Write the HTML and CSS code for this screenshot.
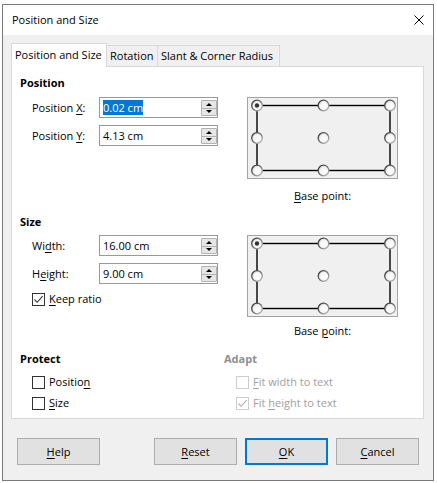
FILE: index.html
```html
<!DOCTYPE html>
<html lang="en">
<head>
<meta charset="utf-8">
<title>Position and Size</title>
<link rel="stylesheet" href="styles.css">
</head>
<body>
<div class="window">
  <div class="titlebar">
    <span class="title">Position and Size</span>
    <svg class="close" width="10" height="10" viewBox="0 0 10 10"><path d="M0.5 0.5 L9.5 9.5 M9.5 0.5 L0.5 9.5" stroke="#000" stroke-width="1" fill="none"/></svg>
  </div>
  <div class="content">
    <div class="tabs">
      <div class="tab active t1">Position and Size</div>
      <div class="tab t2">Rotation</div>
      <div class="tab t3">Slant &amp; Corner Radius</div>
    </div>
    <div class="panel">
      <div class="sec-head">Position</div>
      <div class="row">
        <div class="fields">
          <div class="field"><span class="flabel">Position <u>X</u>:</span>
            <div class="input"><span class="value"><span class="sel">0.02 cm</span></span>
              <div class="spin"><div class="half up"><i class="tri-up"></i></div><div class="half"><i class="tri-down"></i></div></div></div></div>
          <div class="field"><span class="flabel">Position <u>Y</u>:</span>
            <div class="input"><span class="value">4.13 cm</span>
              <div class="spin"><div class="half up"><i class="tri-up"></i></div><div class="half"><i class="tri-down"></i></div></div></div></div>
        </div>
        <div class="grid-col">
          <svg class="grid" width="151" height="82" viewBox="0 0 151 82">
            <defs>
              <radialGradient id="fa" cx="0.6" cy="0.6" r="0.6"><stop offset="0" stop-color="#ffffff"/><stop offset="0.7" stop-color="#f4f4f4"/><stop offset="1" stop-color="#d0d0d0"/></radialGradient>
              <linearGradient id="sa" x1="0" y1="0" x2="1" y2="1"><stop offset="0" stop-color="#2a2a2a"/><stop offset="0.55" stop-color="#777"/><stop offset="1" stop-color="#c8c8c8"/></linearGradient>
            </defs>
            <rect x="0.5" y="0.5" width="150" height="81" fill="#f0f0f0" stroke="#a3a3a3"/>
            <rect x="10" y="8.5" width="133" height="65" fill="none" stroke="#000" stroke-width="1.4"/>
            <g fill="url(#fa)" stroke="url(#sa)" stroke-width="1.3">
              <circle cx="10" cy="8.5" r="5.3"/><circle cx="76.5" cy="8.5" r="5.3"/><circle cx="143" cy="8.5" r="5.3"/>
              <circle cx="10" cy="41" r="5.3"/><circle cx="76.5" cy="41" r="5.3"/><circle cx="143" cy="41" r="5.3"/>
              <circle cx="10" cy="73.5" r="5.3"/><circle cx="76.5" cy="73.5" r="5.3"/><circle cx="143" cy="73.5" r="5.3"/>
            </g>
            <circle cx="10" cy="8.5" r="2.2" fill="#333"/>
          </svg>
          <div class="base b1"><u>B</u>ase point:</div>
        </div>
      </div>

      <div class="sec-head s2">Size</div>
      <div class="row r2">
        <div class="fields">
          <div class="field"><span class="flabel">Wi<u>d</u>th:</span>
            <div class="input"><span class="value">16.00 cm</span>
              <div class="spin"><div class="half up"><i class="tri-up"></i></div><div class="half"><i class="tri-down"></i></div></div></div></div>
          <div class="field"><span class="flabel">H<u>e</u>ight:</span>
            <div class="input"><span class="value">9.00 cm</span>
              <div class="spin"><div class="half up"><i class="tri-up"></i></div><div class="half"><i class="tri-down"></i></div></div></div></div>
          <div class="check">
            <span class="box"><svg width="11" height="11" viewBox="0 0 11 11"><path d="M1.5 5.5 L4.2 8.3 L9.6 2.2" fill="none" stroke="#333" stroke-width="1.1"/></svg></span>
            <span><u>K</u>eep ratio</span>
          </div>
        </div>
        <div class="grid-col">
          <svg class="grid" width="151" height="82" viewBox="0 0 151 82">
            <defs>
              <radialGradient id="fb" cx="0.6" cy="0.6" r="0.6"><stop offset="0" stop-color="#ffffff"/><stop offset="0.7" stop-color="#f4f4f4"/><stop offset="1" stop-color="#d0d0d0"/></radialGradient>
              <linearGradient id="sb" x1="0" y1="0" x2="1" y2="1"><stop offset="0" stop-color="#2a2a2a"/><stop offset="0.55" stop-color="#777"/><stop offset="1" stop-color="#c8c8c8"/></linearGradient>
            </defs>
            <rect x="0.5" y="0.5" width="150" height="81" fill="#f0f0f0" stroke="#a3a3a3"/>
            <rect x="10" y="8.5" width="133" height="65" fill="none" stroke="#000" stroke-width="1.4"/>
            <g fill="url(#fb)" stroke="url(#sb)" stroke-width="1.3">
              <circle cx="10" cy="8.5" r="5.3"/><circle cx="76.5" cy="8.5" r="5.3"/><circle cx="143" cy="8.5" r="5.3"/>
              <circle cx="10" cy="41" r="5.3"/><circle cx="76.5" cy="41" r="5.3"/><circle cx="143" cy="41" r="5.3"/>
              <circle cx="10" cy="73.5" r="5.3"/><circle cx="76.5" cy="73.5" r="5.3"/><circle cx="143" cy="73.5" r="5.3"/>
            </g>
            <circle cx="10" cy="8.5" r="2.2" fill="#333"/>
          </svg>
          <div class="base b2">Base <u>p</u>oint:</div>
        </div>
      </div>

      <div class="bottom">
        <div class="col protect">
          <div class="sec-head">Protect</div>
          <div class="check c1"><span class="box"></span><span>Positio<u>n</u></span></div>
          <div class="check c2"><span class="box"></span><span><u>S</u>ize</span></div>
        </div>
        <div class="col adapt">
          <div class="sec-head dim">Adapt</div>
          <div class="check c1 disabled"><span class="box"></span><span><u>F</u>it width to text</span></div>
          <div class="check c2 disabled"><span class="box"><svg width="11" height="11" viewBox="0 0 11 11"><path d="M1.5 5.5 L4.2 8.3 L9.6 2.2" fill="none" stroke="#b0b0b0" stroke-width="1.1"/></svg></span><span>Fit <u>h</u>eight to text</span></div>
        </div>
      </div>
    </div>
    <div class="buttons">
      <div class="btn help"><span><u>H</u>elp</span></div>
      <div class="btn reset"><span><u>R</u>eset</span></div>
      <div class="btn ok default"><span><u>O</u>K</span></div>
      <div class="btn cancel"><span><u>C</u>ancel</span></div>
    </div>
  </div>
</div>
</body>
</html>
```

FILE: styles.css
```css
html, body {
  margin: 0;
  padding: 0;
  background: #ffffff;
}
body {
  font-family: "Open Sans", "Noto Sans", sans-serif;
  font-size: 11px;
  line-height: 16px;
  color: #000;
}
u {
  text-decoration: underline;
  text-underline-offset: 2px;
  text-decoration-thickness: 1px;
}
.window {
  box-sizing: border-box;
  width: 432px;
  height: 477px;
  margin: 4px 0 0 2px;
  border: 1px solid #7a7a7a;
  background: #f0f0f0;
  display: flex;
  flex-direction: column;
}
.titlebar {
  height: 30px;
  flex: none;
  background: #ffffff;
  display: flex;
  align-items: center;
  justify-content: space-between;
  padding: 0 9px;
}
.close { display: block; }
.content {
  flex: 1;
  display: flex;
  flex-direction: column;
  padding: 8px 0 0 8px;
}
.tabs {
  display: flex;
  align-items: flex-end;
  height: 23px;
}
.tab {
  box-sizing: border-box;
  height: 21px;
  border: 1px solid #d9d9d9;
  border-bottom: none;
  background: #f0f0f0;
  padding-left: 3px;
  line-height: 20px;
  margin-left: -1px;
  white-space: nowrap;
}
.tab.active {
  height: 24px;
  margin-left: 0;
  margin-bottom: -1px;
  background: #ffffff;
  line-height: 22px;
  position: relative;
  z-index: 1;
}
.t1 { width: 96px; }
.t2 { width: 52px; }
.t3 { width: 123px; }
.panel {
  box-sizing: border-box;
  width: 413px;
  height: 353px;
  border: 1px solid #d9d9d9;
  background: #ffffff;
  padding: 8px 0 0 8px;
}
.sec-head {
  font-weight: bold;
  line-height: 16px;
}
.sec-head.s2 { margin-top: 10px; }
.sec-head.dim { color: #8e8e8e; }
.row {
  display: flex;
  margin-top: 6px;
}
.row.r2 { margin-top: 5px; }
.fields {
  margin-left: 12px;
  width: 186px;
  display: flex;
  flex-direction: column;
  gap: 7px;
}
.field {
  display: flex;
  align-items: center;
  height: 21px;
}
.flabel {
  width: 67px;
  white-space: nowrap;
}
.input {
  box-sizing: border-box;
  width: 119px;
  height: 21px;
  border: 1px solid #999999;
  display: flex;
  align-items: center;
  padding-left: 3px;
  background: #fff;
}
.value {
  flex: 1;
  line-height: 15px;
  white-space: nowrap;
}
.sel {
  display: inline-block;
  background: #0078d7;
  color: #ffffff;
  line-height: 15px;
}
.spin {
  box-sizing: border-box;
  width: 16px;
  height: 16px;
  margin: 1px 0 0 0;
  border: 1px solid #b3b3b3;
  border-radius: 1px;
  background: #e6e6e6;
  display: flex;
  flex-direction: column;
}
.half {
  flex: 1;
  display: flex;
  align-items: center;
  justify-content: center;
}
.half.up { border-bottom: 1px solid #b3b3b3; }
.tri-up, .tri-down {
  display: block;
  width: 0;
  height: 0;
  border-left: 3px solid transparent;
  border-right: 3px solid transparent;
}
.tri-up { border-bottom: 3px solid #000; }
.tri-down { border-top: 3px solid #000; }
.grid-col {
  margin-left: 29px;
  width: 151px;
  display: flex;
  flex-direction: column;
  align-items: center;
}
.grid { display: block; }
.base { line-height: 16px; white-space: nowrap; }
.base.b1 { margin-top: 9px; }
.base.b2 { margin-top: 6px; }
.check {
  display: flex;
  align-items: center;
  height: 16px;
  gap: 4px;
  white-space: nowrap;
}
.fields .check { margin-top: 0; }
.box {
  box-sizing: border-box;
  width: 13px;
  height: 13px;
  border: 1px solid #333333;
  background: #ffffff;
  display: flex;
  align-items: center;
  justify-content: center;
  flex: none;
}
.box svg { display: block; }
.check.disabled { color: #a0a0a0; }
.check.disabled .box { border-color: #cccccc; }
.bottom {
  display: flex;
  margin-top: 12px;
}
.col.protect { width: 204px; }
.col .check { margin-left: 12px; }
.col .check.c1 { margin-top: 7px; }
.col .check.c2 { margin-top: 5px; }
.buttons {
  display: flex;
  margin: 19px 0 0 6px;
}
.btn {
  box-sizing: border-box;
  width: 83px;
  height: 27px;
  border: 1px solid #adadad;
  background: #e1e1e1;
  display: flex;
  align-items: center;
  justify-content: center;
}
.btn.reset { margin-left: 54px; }
.btn.ok { margin-left: 8px; }
.btn.cancel { margin-left: 8px; }
.btn.default { border: 2px solid #0078d7; }
```
